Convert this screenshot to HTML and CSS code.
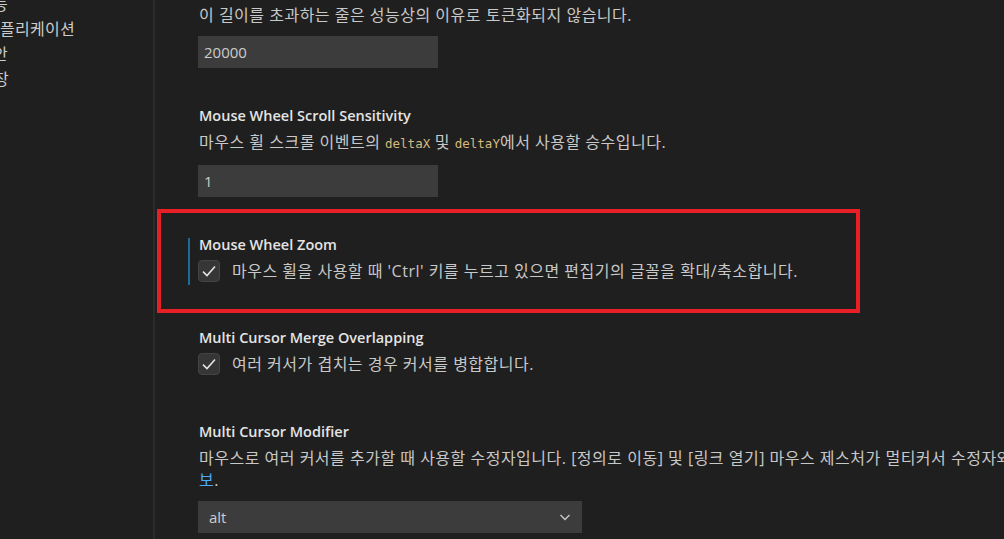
FILE: index.html
```html
<!DOCTYPE html>
<html lang="ko">
<head>
    <meta charset="UTF-8">
    <meta name="viewport" content="width=device-width, initial-scale=1.0">
    <title>설정</title>
    <link rel="stylesheet" href="styles.css">
</head>
<body>
    <div class="app">
        <nav class="toc">
            <div class="toc-item toc-features">기능</div>
            <div class="toc-item toc-app">애플리케이션</div>
            <div class="toc-item toc-security">보안</div>
            <div class="toc-item toc-ext">확장</div>
        </nav>

        <main class="settings">
            <div class="setting">
                <div class="desc">이 길이를 초과하는 줄은 성능상의 이유로 토큰화되지 않습니다.</div>
                <div class="textbox">20000</div>
            </div>

            <div class="setting">
                <div class="title">Mouse Wheel Scroll Sensitivity</div>
                <div class="desc">마우스 휠 스크롤 이벤트의 <code>deltaX</code> 및 <code>deltaY</code>에서 사용할 승수입니다.</div>
                <div class="textbox">1</div>
            </div>

            <div class="highlight">
                <div class="setting focused">
                    <div class="title">Mouse Wheel Zoom</div>
                    <label class="check-row">
                        <span class="checkbox">
                            <svg width="18" height="18" viewBox="0 0 18 18"><path d="M3 9.6l4 4 8-9.2" fill="none" stroke="#e6e6e6" stroke-width="1.5"/></svg>
                        </span>
                        <span class="desc">마우스 휠을 사용할 때 'Ctrl' 키를 누르고 있으면 편집기의 글꼴을 확대/축소합니다.</span>
                    </label>
                </div>
            </div>

            <div class="setting after-box">
                <div class="title">Multi Cursor Merge Overlapping</div>
                <label class="check-row">
                    <span class="checkbox">
                        <svg width="18" height="18" viewBox="0 0 18 18"><path d="M3 9.6l4 4 8-9.2" fill="none" stroke="#e6e6e6" stroke-width="1.5"/></svg>
                    </span>
                    <span class="desc">여러 커서가 겹치는 경우 커서를 병합합니다.</span>
                </label>
            </div>

            <div class="setting after-check">
                <div class="title">Multi Cursor Modifier</div>
                <div class="desc long">마우스로 여러 커서를 추가할 때 사용할 수정자입니다. [정의로 이동] 및 [링크 열기] 마우스 제스처가 멀티커서 수정자와 충돌하지 않도록 조정됩니다. <a class="link" href="#">자세한 정<br>보</a>.</div>
                <div class="selectbox">
                    <span>alt</span>
                    <svg width="16" height="16" viewBox="0 0 16 16"><path d="M3.5 6l4.5 4.5 4.5-4.5" fill="none" stroke="#cccccc" stroke-width="1.3"/></svg>
                </div>
            </div>
        </main>
    </div>
</body>
</html>
```

FILE: styles.css
```css
html, body{
    margin: 0;
    height: 100%;
    overflow: hidden;
}
body{
    background-color: #1f1f1f;
    color: #cccccc;
    font-family: "Open Sans", "Noto Sans CJK KR", sans-serif;
    font-size: 16px;
}
.app{
    display: flex;
    height: 100%;
}
.toc{
    width: 153px;
    flex-shrink: 0;
    border-right: 2px solid #2b2b2b;
    margin-top: -8px;
    overflow: hidden;
    font-size: 16px;
    letter-spacing: 0.3px;
}
.toc-item{
    line-height: 25px;
    white-space: nowrap;
    color: #cccccc;
}
.toc-features{ margin-left: -22px; }
.toc-app{ margin-left: -15px; }
.toc-security{ margin-left: -22px; }
.toc-ext{ margin-left: -21px; }

.settings{
    flex: 1;
    padding: 2px 0 0 43px;
    overflow: hidden;
}
.setting{
    position: relative;
    margin-bottom: 35px;
}
.title{
    font-weight: 600;
    font-size: 14.5px;
    line-height: 26px;
    color: #e4e4e4;
    padding-left: 1px;
}
.desc{
    line-height: 22px;
    margin-top: 2px;
    padding-left: 1px;
    color: #c8c8c8;
    letter-spacing: 0.5px;
}
.desc code{
    font-family: "DejaVu Sans Mono", monospace;
    font-size: 12.5px;
    letter-spacing: 0;
    color: #d7ba7d;
}
.long{
    white-space: nowrap;
}
.link{
    color: #4daafc;
    text-decoration: none;
}
.textbox{
    width: 240px;
    height: 32px;
    margin-top: 10px;
    background-color: #3c3c3c;
    box-sizing: border-box;
    padding: 0 6px;
    line-height: 32px;
    font-size: 15px;
    color: #cccccc;
}
.highlight{
    margin: -23px 0 0 -41px;
    width: 658px;
    border: 4px solid #e81f27;
    padding: 19px 0 27px 37px;
}
.highlight .setting{
    margin-bottom: 0;
}
.focused::before{
    content: "";
    position: absolute;
    left: -10px;
    top: 6px;
    width: 2px;
    height: 47px;
    background-color: #1b6c98;
}
.after-box{
    margin-top: 12px;
    margin-bottom: 44px;
}
.check-row{
    display: flex;
    align-items: center;
    gap: 11px;
    margin-top: 2px;
}
.check-row .desc{
    margin-top: 0;
}
.checkbox{
    width: 22px;
    height: 22px;
    box-sizing: border-box;
    border: 1px solid #444444;
    border-radius: 4px;
    background-color: #363636;
    display: flex;
    align-items: center;
    justify-content: center;
}
.selectbox{
    width: 384px;
    height: 32px;
    margin-top: 10px;
    background-color: #3c3c3c;
    box-sizing: border-box;
    padding: 0 9px 0 11px;
    display: flex;
    align-items: center;
    justify-content: space-between;
    font-size: 15px;
    color: #cccccc;
}
```
